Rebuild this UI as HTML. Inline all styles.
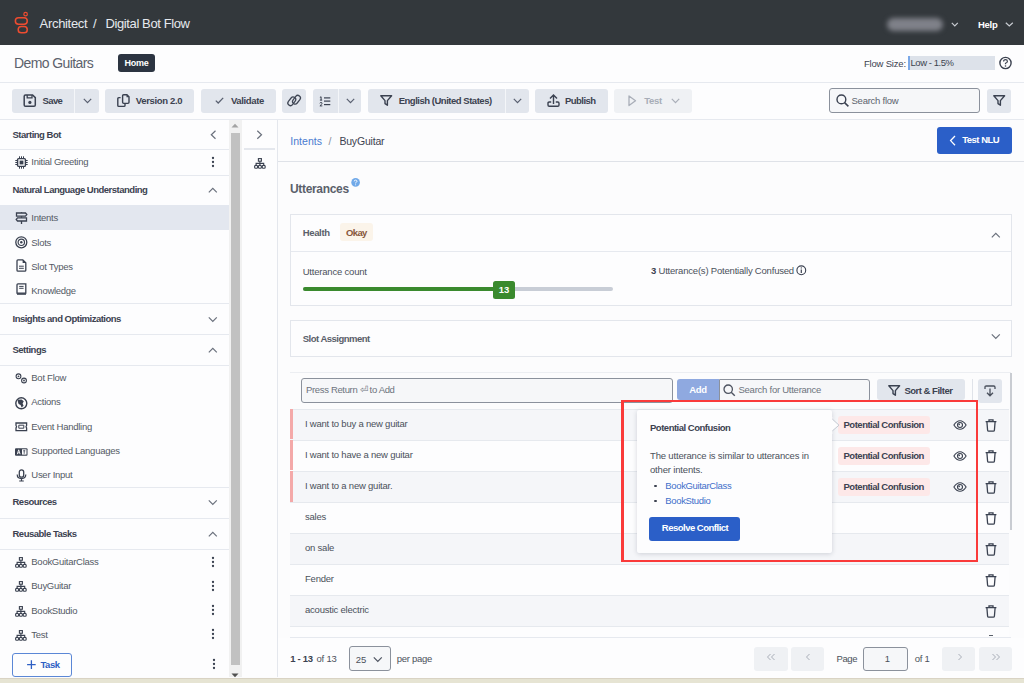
<!DOCTYPE html>
<html><head><meta charset="utf-8">
<style>
*{box-sizing:border-box;margin:0;padding:0}
html,body{width:1024px;height:683px;overflow:hidden}
body{position:relative;background:#fcfcfd;font-family:"Liberation Sans",sans-serif;color:#3c4250}
.a{position:absolute}
.t{position:absolute;white-space:nowrap;line-height:1}
.b{font-weight:bold}
.btn{position:absolute;background:#e2e6ed;border-radius:3px}
.ln{position:absolute;background:#e6e9ef}
svg{position:absolute;overflow:visible}
</style></head><body>

<!-- ===== HEADER ===== -->
<div class="a" style="left:0;top:0;width:1024px;height:45px;background:#33383c"></div>
<svg style="left:0;top:0" width="40" height="45">
  <circle cx="25.6" cy="14.2" r="1.75" fill="none" stroke="#ee4c30" stroke-width="1.2"/>
  <rect x="15.35" y="17.75" width="11.9" height="6.4" rx="3.2" fill="none" stroke="#ee4c30" stroke-width="1.5"/>
  <rect x="18.2" y="26.55" width="9.05" height="6.2" rx="3.1" fill="none" stroke="#ee4c30" stroke-width="1.5"/>
</svg>
<div class="t" style="left:39.6px;top:17px;font-size:13px;color:#e6e9ee;letter-spacing:-0.32px">Architect</div>
<div class="t" style="left:93px;top:17px;font-size:13px;color:#e6e9ee">/</div>
<div class="t" style="left:105.5px;top:17px;font-size:13px;color:#e6e9ee;letter-spacing:-0.39px">Digital Bot Flow</div>
<div class="a" style="left:887px;top:18px;width:56px;height:13px;border-radius:7px;background:#7f8189;filter:blur(2.5px)"></div>
<svg style="left:951px;top:21.5px" width="8" height="5"><path d="M0.8 0.8 L3.8 3.8 L6.8 0.8" fill="none" stroke="#c9ccd2" stroke-width="1.2"/></svg>
<div class="t b" style="left:978px;top:20px;font-size:9.5px;color:#fff;letter-spacing:-0.3px">Help</div>
<svg style="left:1005px;top:21.5px" width="9" height="5"><path d="M0.8 0.8 L4.3 4 L7.8 0.8" fill="none" stroke="#c9ccd2" stroke-width="1.2"/></svg>

<!-- ===== SUBHEADER ===== -->
<div class="a" style="left:0;top:45px;width:1024px;height:37px;background:#fdfdfe"></div>
<div class="t" style="left:14px;top:56px;font-size:14px;color:#5c626c;letter-spacing:-0.6px">Demo Guitars</div>
<div class="a" style="left:118px;top:54px;width:37px;height:18px;border-radius:3px;background:#2c3441"></div>
<div class="t b" style="left:118px;top:59px;width:37px;text-align:center;font-size:9px;color:#fff;letter-spacing:-0.2px">Home</div>
<div class="t" style="left:864px;top:59px;font-size:9.5px;color:#3c4250;letter-spacing:-0.2px">Flow Size:</div>
<div class="a" style="left:907.5px;top:56px;width:87.5px;height:14px;background:#dde2ea;border-left:2px solid #7aa8e8"></div>
<div class="t" style="left:910.5px;top:57.5px;font-size:9.5px;color:#3c4250;letter-spacing:-0.45px">Low - 1.5%</div>
<svg style="left:998px;top:56px" width="15" height="15"><circle cx="7.5" cy="7" r="5.6" fill="none" stroke="#3c4250" stroke-width="1.4"/><path d="M5.6 5.6 Q5.6 3.6 7.5 3.6 Q9.4 3.6 9.4 5.4 Q9.4 6.5 7.5 7.3 L7.5 8.3" fill="none" stroke="#3c4250" stroke-width="1.2"/><circle cx="7.5" cy="10" r="0.8" fill="#3c4250"/></svg>
<div class="ln" style="left:0;top:82px;width:1024px;height:1px"></div>

<!-- ===== TOOLBAR ===== -->
<div class="a" style="left:0;top:83px;width:1024px;height:36px;background:#fdfdfe"></div>
<!-- save -->
<div class="btn" style="left:12px;top:89px;width:86.7px;height:24px"></div>
<div class="a" style="left:74px;top:89px;width:1px;height:24px;background:#f4f6f9"></div>
<svg style="left:23.2px;top:93.8px" width="14" height="14"><path d="M1.2 2.2 Q1.2 0.9 2.5 0.9 L9.6 0.9 L12.3 3.6 L12.3 10.9 Q12.3 12.2 11 12.2 L2.5 12.2 Q1.2 12.2 1.2 10.9 Z" fill="none" stroke="#3a4150" stroke-width="1.5"/><path d="M4.2 1 L4.2 3.9 L9 3.9 L9 1" fill="none" stroke="#3a4150" stroke-width="1.3"/><circle cx="6.9" cy="8.4" r="1.6" fill="#3a4150"/></svg>
<div class="t b" style="left:42.5px;top:96px;font-size:9.5px;letter-spacing:-0.6px">Save</div>
<svg style="left:82.5px;top:97.5px" width="10" height="6"><path d="M0.8 0.8 L4.5 4.6 L8.2 0.8" fill="none" stroke="#596070" stroke-width="1.2"/></svg>
<!-- version -->
<div class="btn" style="left:105.2px;top:89px;width:88.8px;height:24px"></div>
<svg style="left:117px;top:94.3px" width="14" height="14"><path d="M5.6 1.8 Q5.6 0.7 6.7 0.7 H9.9 L12 2.8 V8.3 Q12 9.4 10.9 9.4 H6.7 Q5.6 9.4 5.6 8.3 Z" fill="none" stroke="#3a4150" stroke-width="1.4"/><path d="M9.5 0.7 L12 3.2 H9.5 Z" fill="#3a4150"/><path d="M3.6 3.6 H1.8 Q0.8 3.6 0.8 4.7 V11.4 Q0.8 12.4 1.8 12.4 H6.9 Q8 12.4 8 11.4 V10" fill="none" stroke="#3a4150" stroke-width="1.4"/></svg>
<div class="t b" style="left:135.8px;top:96px;font-size:9.5px;letter-spacing:-0.34px">Version 2.0</div>
<!-- validate -->
<div class="btn" style="left:200.6px;top:89px;width:75.4px;height:24px"></div>
<svg style="left:214.5px;top:97px" width="10" height="8"><path d="M0.8 3.6 L3.2 6 L8.2 0.9" fill="none" stroke="#596070" stroke-width="1.3"/></svg>
<div class="t b" style="left:230.9px;top:96px;font-size:9.5px;letter-spacing:-0.36px">Validate</div>
<!-- link -->
<div class="btn" style="left:282px;top:89px;width:24px;height:24px"></div>
<svg style="left:287px;top:94px" width="15" height="13"><g fill="none" stroke="#3f4654" stroke-width="1.25"><rect x="0.05" y="4.7" width="9.5" height="5.2" rx="2.6" transform="rotate(-52 4.8 7.3)"/><rect x="4.75" y="3.1" width="9.5" height="5.2" rx="2.6" transform="rotate(-52 9.5 5.7)"/></g></svg>
<!-- list -->
<div class="btn" style="left:312.6px;top:89px;width:48.9px;height:24px"></div>
<div class="a" style="left:338px;top:89px;width:1px;height:24px;background:#f4f6f9"></div>
<svg style="left:318.5px;top:95.5px" width="13" height="11"><g fill="none" stroke="#3a4150" stroke-width="1"><path d="M0.9 1.4 L2.1 0.8 V4.2 M0.9 4.1 H3.2"/><path d="M0.8 7.3 Q1.2 6.4 2.1 6.4 Q3.1 6.5 3 7.4 Q2.9 8.2 0.9 9.9 H3.3"/></g><g stroke="#3a4150" stroke-width="1.2"><path d="M5 1.9 H11.3"/><path d="M5 5.1 H11.3"/><path d="M5 8.6 H11.3"/></g></svg>
<svg style="left:345.5px;top:97.5px" width="10" height="6"><path d="M0.8 0.8 L4.5 4.6 L8.2 0.8" fill="none" stroke="#596070" stroke-width="1.2"/></svg>
<!-- english -->
<div class="btn" style="left:368px;top:89px;width:161px;height:24px"></div>
<div class="a" style="left:504.5px;top:89px;width:1px;height:24px;background:#f4f6f9"></div>
<svg style="left:379.5px;top:95px" width="13" height="11"><path d="M0.8 0.8 L11.6 0.8 L7.4 5.6 L7.4 10.2 L5 8.6 L5 5.6 Z" fill="none" stroke="#3a4150" stroke-width="1.4" stroke-linejoin="round"/></svg>
<div class="t b" style="left:398.7px;top:96px;font-size:9.5px;letter-spacing:-0.48px">English (United States)</div>
<svg style="left:512.5px;top:97.5px" width="10" height="6"><path d="M0.8 0.8 L4.5 4.6 L8.2 0.8" fill="none" stroke="#596070" stroke-width="1.2"/></svg>
<!-- publish -->
<div class="btn" style="left:535.3px;top:89px;width:72.3px;height:24px"></div>
<svg style="left:546.5px;top:94px" width="14" height="14"><path d="M4.2 8 H2.2 Q1 8 1 9.2 V11 Q1 12.3 2.2 12.3 H10.8 Q12 12.3 12 11 V9.2 Q12 8 10.8 8 H8.8" fill="none" stroke="#3a4150" stroke-width="1.4"/><path d="M6.5 10 V1.3 M3 4.6 L6.5 1.1 L10 4.6" fill="none" stroke="#3a4150" stroke-width="1.4"/></svg>
<div class="t b" style="left:564.9px;top:96px;font-size:9.5px;letter-spacing:-0.52px">Publish</div>
<!-- test -->
<div class="btn" style="left:613.9px;top:89px;width:78.4px;height:24px;background:#eff1f4"></div>
<svg style="left:627.5px;top:95px" width="9" height="12"><path d="M1 1 L7.5 5.8 L1 10.6 Z" fill="none" stroke="#a9aeb8" stroke-width="1.3" stroke-linejoin="round"/></svg>
<div class="t b" style="left:644.3px;top:96px;font-size:9.5px;letter-spacing:-0.36px;color:#a7adb7">Test</div>
<svg style="left:670.5px;top:97.5px" width="10" height="6"><path d="M0.8 0.8 L4.5 4.6 L8.2 0.8" fill="none" stroke="#a9aeb8" stroke-width="1.2"/></svg>
<!-- search flow -->
<div class="a" style="left:829.4px;top:88.4px;width:151px;height:24.3px;border:1px solid #8b919c;border-radius:3px;background:#f6f7f9"></div>
<svg style="left:835.5px;top:94px" width="14" height="14"><circle cx="5.4" cy="5.4" r="4.4" fill="none" stroke="#3a4150" stroke-width="1.4"/><path d="M8.6 8.6 L12.4 12.4" stroke="#3a4150" stroke-width="1.5"/></svg>
<div class="t" style="left:851.5px;top:96px;font-size:9.5px;letter-spacing:-0.24px;color:#5d636e">Search flow</div>
<div class="btn" style="left:987px;top:88.5px;width:24px;height:24.2px"></div>
<svg style="left:992.5px;top:95px" width="13" height="11"><path d="M0.8 0.8 L11.6 0.8 L7.4 5.6 L7.4 10.2 L5 8.6 L5 5.6 Z" fill="none" stroke="#3a4150" stroke-width="1.4" stroke-linejoin="round"/></svg>
<div class="ln" style="left:0;top:119px;width:1024px;height:1px"></div>

<!-- ===== SIDEBAR ===== -->
<div class="a" style="left:0;top:120px;width:229px;height:557px;background:#fdfdfe"></div>
<div class="t b" style="left:12.5px;top:129.8px;font-size:9.5px;letter-spacing:-0.5px;color:#3c4250">Starting Bot</div><svg style="left:210.4px;top:130px" width="7" height="10"><path d="M5.5 0.8 L1.3 4.8 L5.5 8.8" fill="none" stroke="#6a707c" stroke-width="1.2"/></svg>
<div class="ln" style="left:0px;top:149px;width:229px;height:1px"></div>
<div class="t" style="left:31.3px;top:157.4px;font-size:9.5px;letter-spacing:-0.27px;color:#545a65">Initial Greeting</div><svg style="left:15px;top:155.5px" width="13" height="13"><rect x="2.6" y="2.6" width="7.8" height="7.8" rx="1" fill="none" stroke="#3a4150" stroke-width="1.4"/><rect x="4.6" y="4.6" width="3.8" height="3.8" fill="#3a4150"/><g stroke="#3a4150" stroke-width="1"><path d="M4.5 0.3V2.4M6.5 0.3V2.4M8.5 0.3V2.4M4.5 10.6V12.7M6.5 10.6V12.7M8.5 10.6V12.7M0.3 4.5H2.4M0.3 6.5H2.4M0.3 8.5H2.4M10.6 4.5H12.7M10.6 6.5H12.7M10.6 8.5H12.7"/></g></svg><svg style="left:211px;top:155.6px" width="4" height="12"><g fill="#3a4150"><circle cx="2" cy="2" r="1.15"/><circle cx="2" cy="6" r="1.15"/><circle cx="2" cy="10" r="1.15"/></g></svg>
<div class="ln" style="left:0px;top:174.5px;width:229px;height:1px"></div>
<div class="t b" style="left:12.5px;top:185px;font-size:9.5px;letter-spacing:-0.5px;color:#3c4250">Natural Language Understanding</div><svg style="left:208px;top:187px" width="10" height="7"><path d="M0.8 5.3 L4.8 1.3 L8.8 5.3" fill="none" stroke="#6a707c" stroke-width="1.2"/></svg>
<div class="a" style="left:0;top:205px;width:229px;height:25px;background:#e3e7ef"></div>
<div class="t" style="left:31.3px;top:213px;font-size:9.5px;letter-spacing:-0.27px;color:#545a65">Intents</div><svg style="left:15px;top:212px" width="13" height="13"><g fill="none" stroke="#3a4150" stroke-width="1.3"><path d="M1.5 1 H10.5 L11.8 2.6 L10.5 4.2 H1.5 Z"/><path d="M11.5 5.8 H2.5 L1.2 7.4 L2.5 9 H11.5 Z"/><path d="M6.5 0.2 V1 M6.5 4.2 V5.8 M6.5 9 V12"/></g></svg>
<div class="t" style="left:31.3px;top:237.6px;font-size:9.5px;letter-spacing:-0.27px;color:#545a65">Slots</div><svg style="left:15px;top:235.5px" width="13" height="13"><g fill="none" stroke="#3a4150"><circle cx="6.3" cy="6.3" r="5.5" stroke-width="1.3"/><circle cx="6.3" cy="6.3" r="3.2" stroke-width="1.2"/></g><circle cx="6.3" cy="6.3" r="1.2" fill="#3a4150"/></svg>
<div class="t" style="left:31.3px;top:261.8px;font-size:9.5px;letter-spacing:-0.27px;color:#545a65">Slot Types</div><svg style="left:16px;top:258.5px" width="11" height="14"><path d="M1 1.8 Q1 0.8 2 0.8 L6.8 0.8 L9.8 3.8 L9.8 11.2 Q9.8 12.2 8.8 12.2 L2 12.2 Q1 12.2 1 11.2 Z" fill="none" stroke="#3a4150" stroke-width="1.3"/><path d="M6.6 0.8 V4 H9.8 Z" fill="#3a4150"/><path d="M3 7.2 H7.8 M3 9.3 H7.8" stroke="#3a4150" stroke-width="1"/></svg>
<div class="t" style="left:31.3px;top:285.5px;font-size:9.5px;letter-spacing:-0.27px;color:#545a65">Knowledge</div><svg style="left:16px;top:282.5px" width="11" height="13"><path d="M1 10.2 V1.8 Q1 0.8 2 0.8 L9.8 0.8 L9.8 10.2 Z" fill="none" stroke="#3a4150" stroke-width="1.3"/><rect x="1" y="10" width="9" height="2" fill="#3a4150" opacity="0.8"/><path d="M3.2 3.4 H7.6 M3.2 5.3 H7.6" stroke="#3a4150" stroke-width="1"/></svg>
<div class="ln" style="left:0px;top:303px;width:229px;height:1px"></div>
<div class="t b" style="left:12.5px;top:313.7px;font-size:9.5px;letter-spacing:-0.5px;color:#3c4250">Insights and Optimizations</div><svg style="left:208px;top:315.5px" width="10" height="7"><path d="M0.8 1.3 L4.8 5.3 L8.8 1.3" fill="none" stroke="#6a707c" stroke-width="1.2"/></svg>
<div class="ln" style="left:0px;top:334px;width:229px;height:1px"></div>
<div class="t b" style="left:12.5px;top:344.8px;font-size:9.5px;letter-spacing:-0.5px;color:#3c4250">Settings</div><svg style="left:208px;top:346.5px" width="10" height="7"><path d="M0.8 5.3 L4.8 1.3 L8.8 5.3" fill="none" stroke="#6a707c" stroke-width="1.2"/></svg>
<div class="ln" style="left:0px;top:365px;width:229px;height:1px"></div>
<div class="t" style="left:31.3px;top:373px;font-size:9.5px;letter-spacing:-0.27px;color:#545a65">Bot Flow</div><svg style="left:15px;top:373px" width="13" height="11"><g fill="none" stroke="#3a4150" stroke-width="1.1"><circle cx="3.5" cy="3.3" r="2.4"/><circle cx="9" cy="7.5" r="2.4"/></g><circle cx="3.5" cy="3.3" r="0.9" fill="#3a4150"/><circle cx="9" cy="7.5" r="0.9" fill="#3a4150"/></svg>
<div class="t" style="left:31.3px;top:397px;font-size:9.5px;letter-spacing:-0.27px;color:#545a65">Actions</div><svg style="left:15px;top:396.5px" width="13" height="13"><circle cx="6.3" cy="6.3" r="5.5" fill="none" stroke="#3a4150" stroke-width="1.4"/><path d="M3 2.8 L6.5 2.4 L8.8 4.2 L7.6 6.6 L8.6 8.8 L6.6 10.6 L5.6 8 L3.6 7 L2.8 4.6 Z" fill="#3a4150"/></svg>
<div class="t" style="left:31.3px;top:421.6px;font-size:9.5px;letter-spacing:-0.27px;color:#545a65">Event Handling</div><svg style="left:15px;top:422px" width="13" height="10"><g fill="none" stroke="#3a4150" stroke-width="1.3"><path d="M1 1 H11.6 V3.4 Q10.4 4.7 11.6 6 V8.6 H1 V6 Q2.2 4.7 1 3.4 Z"/><path d="M3.8 3.2 H8.8 V6.2 H3.8 Z" stroke-width="1"/></g></svg>
<div class="t" style="left:31.3px;top:445.5px;font-size:9.5px;letter-spacing:-0.27px;color:#545a65">Supported Languages</div><svg style="left:15px;top:447.5px" width="13" height="8"><rect x="0" y="0.2" width="12.5" height="7.5" rx="1" fill="#3a4150"/><rect x="7" y="1.3" width="4.5" height="5.3" fill="#fdfdfe"/><path d="M2.3 6.2 L3.7 1.8 L5.1 6.2 M2.8 4.8 H4.6" fill="none" stroke="#fdfdfe" stroke-width="0.9"/><path d="M8.2 2.8 H10.3 M9.2 2.3 V5.8" stroke="#3a4150" stroke-width="0.8"/></svg>
<div class="t" style="left:31.3px;top:469.8px;font-size:9.5px;letter-spacing:-0.27px;color:#545a65">User Input</div><svg style="left:16px;top:468.5px" width="11" height="13"><rect x="3.3" y="0.8" width="4.4" height="7.4" rx="2.2" fill="none" stroke="#3a4150" stroke-width="1.3"/><path d="M1.2 5.6 Q1.2 9.6 5.5 9.6 Q9.8 9.6 9.8 5.6 M5.5 9.6 V12 M3.2 12 H7.8" fill="none" stroke="#3a4150" stroke-width="1.2"/></svg>
<div class="ln" style="left:0px;top:487px;width:229px;height:1px"></div>
<div class="t b" style="left:12.5px;top:497.4px;font-size:9.5px;letter-spacing:-0.5px;color:#3c4250">Resources</div><svg style="left:208px;top:499px" width="10" height="7"><path d="M0.8 1.3 L4.8 5.3 L8.8 1.3" fill="none" stroke="#6a707c" stroke-width="1.2"/></svg>
<div class="ln" style="left:0px;top:518px;width:229px;height:1px"></div>
<div class="t b" style="left:12.5px;top:528.7px;font-size:9.5px;letter-spacing:-0.5px;color:#3c4250">Reusable Tasks</div><svg style="left:208px;top:530.5px" width="10" height="7"><path d="M0.8 5.3 L4.8 1.3 L8.8 5.3" fill="none" stroke="#6a707c" stroke-width="1.2"/></svg>
<div class="ln" style="left:0px;top:549px;width:229px;height:1px"></div>
<div class="t" style="left:31.3px;top:557.2px;font-size:9.5px;letter-spacing:-0.27px;color:#545a65">BookGuitarClass</div><svg style="left:15px;top:557.2px" width="12" height="11"><g fill="none" stroke="#3a4150" stroke-width="1.1"><rect x="4.4" y="0.6" width="3" height="2.6"/><rect x="0.6" y="7.4" width="3" height="2.8" rx="1"/><rect x="4.4" y="7.4" width="3" height="2.8" rx="1"/><rect x="8.2" y="7.4" width="3" height="2.8" rx="1"/><path d="M5.9 3.2 V7.4 M2.1 7.4 V5.4 H9.7 V7.4"/></g></svg><svg style="left:211px;top:555.7px" width="4" height="12"><g fill="#3a4150"><circle cx="2" cy="2" r="1.15"/><circle cx="2" cy="6" r="1.15"/><circle cx="2" cy="10" r="1.15"/></g></svg>
<div class="t" style="left:31.3px;top:581.4px;font-size:9.5px;letter-spacing:-0.27px;color:#545a65">BuyGuitar</div><svg style="left:15px;top:581.4px" width="12" height="11"><g fill="none" stroke="#3a4150" stroke-width="1.1"><rect x="4.4" y="0.6" width="3" height="2.6"/><rect x="0.6" y="7.4" width="3" height="2.8" rx="1"/><rect x="4.4" y="7.4" width="3" height="2.8" rx="1"/><rect x="8.2" y="7.4" width="3" height="2.8" rx="1"/><path d="M5.9 3.2 V7.4 M2.1 7.4 V5.4 H9.7 V7.4"/></g></svg><svg style="left:211px;top:579.9px" width="4" height="12"><g fill="#3a4150"><circle cx="2" cy="2" r="1.15"/><circle cx="2" cy="6" r="1.15"/><circle cx="2" cy="10" r="1.15"/></g></svg>
<div class="t" style="left:31.3px;top:605.6px;font-size:9.5px;letter-spacing:-0.27px;color:#545a65">BookStudio</div><svg style="left:15px;top:605.6px" width="12" height="11"><g fill="none" stroke="#3a4150" stroke-width="1.1"><rect x="4.4" y="0.6" width="3" height="2.6"/><rect x="0.6" y="7.4" width="3" height="2.8" rx="1"/><rect x="4.4" y="7.4" width="3" height="2.8" rx="1"/><rect x="8.2" y="7.4" width="3" height="2.8" rx="1"/><path d="M5.9 3.2 V7.4 M2.1 7.4 V5.4 H9.7 V7.4"/></g></svg><svg style="left:211px;top:604.1px" width="4" height="12"><g fill="#3a4150"><circle cx="2" cy="2" r="1.15"/><circle cx="2" cy="6" r="1.15"/><circle cx="2" cy="10" r="1.15"/></g></svg>
<div class="t" style="left:31.3px;top:629.8px;font-size:9.5px;letter-spacing:-0.27px;color:#545a65">Test</div><svg style="left:15px;top:629.8px" width="12" height="11"><g fill="none" stroke="#3a4150" stroke-width="1.1"><rect x="4.4" y="0.6" width="3" height="2.6"/><rect x="0.6" y="7.4" width="3" height="2.8" rx="1"/><rect x="4.4" y="7.4" width="3" height="2.8" rx="1"/><rect x="8.2" y="7.4" width="3" height="2.8" rx="1"/><path d="M5.9 3.2 V7.4 M2.1 7.4 V5.4 H9.7 V7.4"/></g></svg><svg style="left:211px;top:628.3px" width="4" height="12"><g fill="#3a4150"><circle cx="2" cy="2" r="1.15"/><circle cx="2" cy="6" r="1.15"/><circle cx="2" cy="10" r="1.15"/></g></svg>
<div class="a" style="left:12.3px;top:652.6px;width:59.5px;height:24px;border:1px solid #5b87d6;border-radius:3px;background:#fdfdfe"></div>
<svg style="left:26.5px;top:660px" width="10" height="10"><path d="M4.4 0.3 V8.9 M0.1 4.6 H8.7" stroke="#2e5fc4" stroke-width="1.3"/></svg>
<div class="t b" style="left:40.4px;top:659.5px;font-size:9.5px;letter-spacing:-0.4px;color:#2e5fc4">Task</div>
<svg style="left:212px;top:658px" width="4" height="12"><g fill="#3a4150"><circle cx="2" cy="2" r="1.15"/><circle cx="2" cy="6" r="1.15"/><circle cx="2" cy="10" r="1.15"/></g></svg>
<div class="a" style="left:229px;top:120px;width:12.5px;height:557px;background:#f1f1f1"></div>
<div class="a" style="left:230.5px;top:132.6px;width:9.5px;height:532.7px;background:#c1c1c1"></div>
<svg style="left:231px;top:123px" width="8" height="5"><path d="M0.5 4.5 L4 0.8 L7.5 4.5 Z" fill="#a3a3a3"/></svg>
<svg style="left:231px;top:673px" width="8" height="5"><path d="M0.5 0.5 L4 4.2 L7.5 0.5 Z" fill="#505050"/></svg>
<div class="a" style="left:241.5px;top:120px;width:36px;height:557px;background:#fdfdfe"></div>
<div class="a" style="left:277px;top:120px;width:1px;height:557px;background:#e4e7ed"></div>
<svg style="left:256.4px;top:130px" width="7" height="10"><path d="M1.3 0.8 L5.5 4.8 L1.3 8.8" fill="none" stroke="#6a707c" stroke-width="1.2"/></svg>
<div class="a" style="left:244px;top:148px;width:31px;height:2px;background:#e4e7ed"></div>
<svg style="left:253.8px;top:158px" width="12" height="11"><g fill="none" stroke="#3a4150" stroke-width="1.1"><rect x="4.4" y="0.6" width="3" height="2.6"/><rect x="0.6" y="7.4" width="3" height="2.8" rx="1"/><rect x="4.4" y="7.4" width="3" height="2.8" rx="1"/><rect x="8.2" y="7.4" width="3" height="2.8" rx="1"/><path d="M5.9 3.2 V7.4 M2.1 7.4 V5.4 H9.7 V7.4"/></g></svg>
<!-- ===== MAIN ===== -->
<div class="a" style="left:278px;top:120px;width:746px;height:557px;background:#fcfcfd"></div>
<div class="t" style="left:290.2px;top:135.8px;font-size:10.5px;letter-spacing:0.05px;color:#4a7bd0;">Intents</div>
<div class="t" style="left:328.5px;top:135.8px;font-size:10.5px;letter-spacing:0px;color:#8a909a;">/</div>
<div class="t" style="left:339.4px;top:135.8px;font-size:10.5px;letter-spacing:-0.19px;color:#3c4250;">BuyGuitar</div>
<div class="ln" style="left:278px;top:161px;width:746px;height:1px;background:#dfe2e8"></div>
<div class="a" style="left:937px;top:127px;width:75px;height:26.6px;background:#2b5fc8;border-radius:3px"></div>
<svg style="left:948.5px;top:134.5px" width="8" height="12"><path d="M6 1 L1.6 5.6 L6 10.2" fill="none" stroke="#fff" stroke-width="1.3"/></svg>
<div class="t b" style="left:962.2px;top:135.2px;font-size:9.5px;letter-spacing:-0.5px;color:#fff;">Test NLU</div>
<div class="t b" style="left:290px;top:182.7px;font-size:12px;letter-spacing:-0.33px;color:#5a606b;">Utterances</div>
<svg style="left:351.2px;top:177.8px" width="10" height="10"><circle cx="4.6" cy="4.4" r="4.3" fill="#70a9e9"/><path d="M3.2 3.4 Q3.2 2.1 4.6 2.1 Q6 2.1 6 3.3 Q6 4.1 4.6 4.7 L4.6 5.4" fill="none" stroke="#fff" stroke-width="0.9"/><circle cx="4.6" cy="6.8" r="0.55" fill="#fff"/></svg>
<div class="a" style="left:290px;top:213.5px;width:722px;height:92px;border:1px solid #e3e6ec;background:#fdfdfe"></div>
<div class="ln" style="left:291px;top:250.5px;width:720px;height:1px"></div>
<div class="t b" style="left:302.7px;top:228px;font-size:9.5px;letter-spacing:-0.34px;color:#5a606a;">Health</div>
<div class="a" style="left:339.8px;top:223px;width:33px;height:18.4px;background:#fbf4ea;border-radius:3px"></div>
<div class="t b" style="left:346px;top:228px;font-size:9.5px;letter-spacing:-0.62px;color:#87573b;">Okay</div>
<svg style="left:990.5px;top:232px" width="10" height="7"><path d="M0.8 5.3 L4.8 1.3 L8.8 5.3" fill="none" stroke="#6a707c" stroke-width="1.2"/></svg>
<div class="t" style="left:302.7px;top:266.6px;font-size:9.5px;letter-spacing:-0.2px;color:#4b515b;">Utterance count</div>
<div class="a" style="left:302.7px;top:287.3px;width:310px;height:4.2px;background:#c8cdd6;border-radius:2px"></div>
<div class="a" style="left:302.7px;top:287.3px;width:195px;height:4.2px;background:#3a8a2e;border-radius:2px"></div>
<div class="a" style="left:492.8px;top:281.2px;width:22.2px;height:17.5px;background:#3a8a2e;border-radius:2.5px"></div>
<div class="t b" style="left:492.8px;top:285px;font-size:9.5px;letter-spacing:0px;color:#fff;width:22.6px;text-align:center">13</div>
<div class="t b" style="left:651px;top:266px;font-size:9.5px;letter-spacing:0px;color:#3c4250;">3</div>
<div class="t" style="left:658.5px;top:266px;font-size:9.5px;letter-spacing:-0.2px;color:#4b515b;">Utterance(s) Potentially Confused</div>
<svg style="left:795.5px;top:264.5px" width="11" height="11"><circle cx="5.3" cy="5.3" r="4.4" fill="none" stroke="#3a4150" stroke-width="1.1"/><path d="M5.3 4.4 V8" stroke="#3a4150" stroke-width="1.2"/><circle cx="5.3" cy="2.9" r="0.65" fill="#3a4150"/></svg>
<div class="a" style="left:290px;top:320.3px;width:722px;height:36.5px;border:1px solid #e3e6ec;background:#fdfdfe"></div>
<div class="t b" style="left:302.7px;top:333.6px;font-size:9.5px;letter-spacing:-0.5px;color:#5a606a;">Slot Assignment</div>
<svg style="left:990.5px;top:333px" width="10" height="7"><path d="M0.8 1.3 L4.8 5.3 L8.8 1.3" fill="none" stroke="#6a707c" stroke-width="1.2"/></svg>
<div class="ln" style="left:290px;top:372px;width:721px;height:1px;background:#eceef2"></div>
<div class="a" style="left:300.5px;top:378.4px;width:372px;height:24.6px;border:1px solid #8b919c;border-radius:3px;background:#f6f7f9"></div>
<div class="t" style="left:306px;top:384.7px;font-size:9.5px;letter-spacing:-0.34px;color:#6d737d;">Press Return &#x23CE; to Add</div>
<div class="a" style="left:677px;top:378.6px;width:42.4px;height:21.6px;background:#8fa9e0;border-radius:3px 0 0 3px"></div>
<div class="t b" style="left:677px;top:385px;font-size:9.5px;letter-spacing:-0.3px;color:#fff;width:42px;text-align:center">Add</div>
<div class="a" style="left:719.4px;top:378.6px;width:151px;height:23.4px;border:1px solid #8b919c;border-radius:0 3px 3px 0;background:#f6f7f9"></div>
<svg style="left:722.5px;top:384px" width="13" height="13"><circle cx="5.2" cy="5.2" r="4.2" fill="none" stroke="#4d5360" stroke-width="1.3"/><path d="M8.2 8.2 L11.8 11.8" stroke="#4d5360" stroke-width="1.4"/></svg>
<div class="t" style="left:738.5px;top:385px;font-size:9.5px;letter-spacing:-0.25px;color:#6d737d;">Search for Utterance</div>
<div class="btn" style="left:876.5px;top:378.8px;width:88.5px;height:21.6px"></div>
<svg style="left:888px;top:384.5px" width="13" height="11"><path d="M0.8 0.8 L11.6 0.8 L7.4 5.6 L7.4 10.2 L5 8.6 L5 5.6 Z" fill="none" stroke="#3a4150" stroke-width="1.4" stroke-linejoin="round"/></svg>
<div class="t b" style="left:904.4px;top:385.5px;font-size:9.5px;letter-spacing:-0.49px;color:#3c4250;">Sort &amp; Filter</div>
<div class="a" style="left:971.5px;top:378.5px;width:1px;height:22px;background:#e0e3e9"></div>
<div class="btn" style="left:978.3px;top:378.8px;width:23.5px;height:24.4px"></div>
<svg style="left:984px;top:385px" width="13" height="12"><path d="M1 4 V2.2 Q1 1 2.2 1 H9.8 Q11 1 11 2.2 V4" fill="none" stroke="#4a505c" stroke-width="1.3"/><path d="M6 3.6 V10.8 M3 7.8 L6 10.8 L9 7.8" fill="none" stroke="#4a505c" stroke-width="1.3"/></svg>
<div class="a" style="left:1009.5px;top:372.5px;width:2.2px;height:157px;background:#c9ccd2"></div>
<div class="a" style="left:290px;top:409.00px;width:719px;height:31.05px;background:#f5f6f9;border-top:1px solid #e6e9ee"></div>
<div class="t" style="left:305px;top:418.90px;font-size:9.5px;letter-spacing:-0.22px;color:#4b515b;">I want to buy a new guitar</div>
<svg style="left:984.80px;top:418.70px" width="12" height="13"><path d="M0.6 2.6 H11.4 M4 2.4 V0.8 H8 V2.4" fill="none" stroke="#3a4150" stroke-width="1.3"/><path d="M1.9 2.8 L2.6 11.2 Q2.7 12.2 3.7 12.2 H8.3 Q9.3 12.2 9.4 11.2 L10.1 2.8" fill="none" stroke="#3a4150" stroke-width="1.3"/></svg>
<div class="a" style="left:290px;top:409.00px;width:3px;height:30.45px;background:#f4a9a9"></div>
<div class="a" style="left:837.5px;top:416.00px;width:92.5px;height:17.7px;background:#fde8e8;border-radius:3px"></div>
<div class="t b" style="left:843.5px;top:419.90px;font-size:9.5px;letter-spacing:-0.49px;color:#3c4250;">Potential Confusion</div>
<svg style="left:953.20px;top:419.90px" width="14" height="10"><path d="M0.9 5 Q3.6 0.7 7 0.7 Q10.4 0.7 13.1 5 Q10.4 9.3 7 9.3 Q3.6 9.3 0.9 5 Z" fill="none" stroke="#3a4150" stroke-width="1.1"/><circle cx="7" cy="5" r="2.5" fill="none" stroke="#3a4150" stroke-width="1.1"/><circle cx="6.2" cy="4.4" r="0.8" fill="#3a4150"/></svg>
<div class="a" style="left:290px;top:440.05px;width:719px;height:31.05px;background:#fdfdfe;border-top:1px solid #e6e9ee"></div>
<div class="t" style="left:305px;top:449.95px;font-size:9.5px;letter-spacing:-0.22px;color:#4b515b;">I want to have a new guitar</div>
<svg style="left:984.80px;top:449.75px" width="12" height="13"><path d="M0.6 2.6 H11.4 M4 2.4 V0.8 H8 V2.4" fill="none" stroke="#3a4150" stroke-width="1.3"/><path d="M1.9 2.8 L2.6 11.2 Q2.7 12.2 3.7 12.2 H8.3 Q9.3 12.2 9.4 11.2 L10.1 2.8" fill="none" stroke="#3a4150" stroke-width="1.3"/></svg>
<div class="a" style="left:290px;top:440.05px;width:3px;height:30.45px;background:#f4a9a9"></div>
<div class="a" style="left:837.5px;top:447.05px;width:92.5px;height:17.7px;background:#fde8e8;border-radius:3px"></div>
<div class="t b" style="left:843.5px;top:450.95px;font-size:9.5px;letter-spacing:-0.49px;color:#3c4250;">Potential Confusion</div>
<svg style="left:953.20px;top:450.95px" width="14" height="10"><path d="M0.9 5 Q3.6 0.7 7 0.7 Q10.4 0.7 13.1 5 Q10.4 9.3 7 9.3 Q3.6 9.3 0.9 5 Z" fill="none" stroke="#3a4150" stroke-width="1.1"/><circle cx="7" cy="5" r="2.5" fill="none" stroke="#3a4150" stroke-width="1.1"/><circle cx="6.2" cy="4.4" r="0.8" fill="#3a4150"/></svg>
<div class="a" style="left:290px;top:471.10px;width:719px;height:31.05px;background:#f5f6f9;border-top:1px solid #e6e9ee"></div>
<div class="t" style="left:305px;top:481.00px;font-size:9.5px;letter-spacing:-0.22px;color:#4b515b;">I want to a new guitar.</div>
<svg style="left:984.80px;top:480.80px" width="12" height="13"><path d="M0.6 2.6 H11.4 M4 2.4 V0.8 H8 V2.4" fill="none" stroke="#3a4150" stroke-width="1.3"/><path d="M1.9 2.8 L2.6 11.2 Q2.7 12.2 3.7 12.2 H8.3 Q9.3 12.2 9.4 11.2 L10.1 2.8" fill="none" stroke="#3a4150" stroke-width="1.3"/></svg>
<div class="a" style="left:290px;top:471.10px;width:3px;height:30.45px;background:#f4a9a9"></div>
<div class="a" style="left:837.5px;top:478.10px;width:92.5px;height:17.7px;background:#fde8e8;border-radius:3px"></div>
<div class="t b" style="left:843.5px;top:482.00px;font-size:9.5px;letter-spacing:-0.49px;color:#3c4250;">Potential Confusion</div>
<svg style="left:953.20px;top:482.00px" width="14" height="10"><path d="M0.9 5 Q3.6 0.7 7 0.7 Q10.4 0.7 13.1 5 Q10.4 9.3 7 9.3 Q3.6 9.3 0.9 5 Z" fill="none" stroke="#3a4150" stroke-width="1.1"/><circle cx="7" cy="5" r="2.5" fill="none" stroke="#3a4150" stroke-width="1.1"/><circle cx="6.2" cy="4.4" r="0.8" fill="#3a4150"/></svg>
<div class="a" style="left:290px;top:502.15px;width:719px;height:31.05px;background:#fdfdfe;border-top:1px solid #e6e9ee"></div>
<div class="t" style="left:305px;top:512.05px;font-size:9.5px;letter-spacing:-0.22px;color:#4b515b;">sales</div>
<svg style="left:984.80px;top:511.85px" width="12" height="13"><path d="M0.6 2.6 H11.4 M4 2.4 V0.8 H8 V2.4" fill="none" stroke="#3a4150" stroke-width="1.3"/><path d="M1.9 2.8 L2.6 11.2 Q2.7 12.2 3.7 12.2 H8.3 Q9.3 12.2 9.4 11.2 L10.1 2.8" fill="none" stroke="#3a4150" stroke-width="1.3"/></svg>
<div class="a" style="left:290px;top:533.20px;width:719px;height:31.05px;background:#f5f6f9;border-top:1px solid #e6e9ee"></div>
<div class="t" style="left:305px;top:543.10px;font-size:9.5px;letter-spacing:-0.22px;color:#4b515b;">on sale</div>
<svg style="left:984.80px;top:542.90px" width="12" height="13"><path d="M0.6 2.6 H11.4 M4 2.4 V0.8 H8 V2.4" fill="none" stroke="#3a4150" stroke-width="1.3"/><path d="M1.9 2.8 L2.6 11.2 Q2.7 12.2 3.7 12.2 H8.3 Q9.3 12.2 9.4 11.2 L10.1 2.8" fill="none" stroke="#3a4150" stroke-width="1.3"/></svg>
<div class="a" style="left:290px;top:564.25px;width:719px;height:31.05px;background:#fdfdfe;border-top:1px solid #e6e9ee"></div>
<div class="t" style="left:305px;top:574.15px;font-size:9.5px;letter-spacing:-0.22px;color:#4b515b;">Fender</div>
<svg style="left:984.80px;top:573.95px" width="12" height="13"><path d="M0.6 2.6 H11.4 M4 2.4 V0.8 H8 V2.4" fill="none" stroke="#3a4150" stroke-width="1.3"/><path d="M1.9 2.8 L2.6 11.2 Q2.7 12.2 3.7 12.2 H8.3 Q9.3 12.2 9.4 11.2 L10.1 2.8" fill="none" stroke="#3a4150" stroke-width="1.3"/></svg>
<div class="a" style="left:290px;top:595.30px;width:719px;height:31.05px;background:#f5f6f9;border-top:1px solid #e6e9ee"></div>
<div class="t" style="left:305px;top:605.20px;font-size:9.5px;letter-spacing:-0.22px;color:#4b515b;">acoustic electric</div>
<svg style="left:984.80px;top:605.00px" width="12" height="13"><path d="M0.6 2.6 H11.4 M4 2.4 V0.8 H8 V2.4" fill="none" stroke="#3a4150" stroke-width="1.3"/><path d="M1.9 2.8 L2.6 11.2 Q2.7 12.2 3.7 12.2 H8.3 Q9.3 12.2 9.4 11.2 L10.1 2.8" fill="none" stroke="#3a4150" stroke-width="1.3"/></svg>
<div class="a" style="left:290px;top:626.35px;width:719px;height:10.35px;background:#fdfdfe;border-top:1px solid #e6e9ee"></div>
<div class="a" style="left:989px;top:634.9px;width:4px;height:1.3px;background:#5a606a"></div>
<div class="ln" style="left:290px;top:636.7px;width:721px;height:1px"></div>
<div class="a" style="left:278px;top:637.7px;width:746px;height:40px;background:#fdfdfe"></div>
<div class="t b" style="left:290.2px;top:654px;font-size:9.5px;letter-spacing:-0.3px;color:#3c4250;">1 - 13</div>
<div class="t" style="left:316.5px;top:654px;font-size:9.5px;letter-spacing:-0.2px;color:#4b515b;">of 13</div>
<div class="a" style="left:349px;top:646.4px;width:41.5px;height:24.4px;border:1px solid #8b919c;border-radius:3px;background:#f6f7f9"></div>
<div class="t" style="left:355.8px;top:655px;font-size:9.5px;letter-spacing:0px;color:#4b515b;">25</div>
<svg style="left:372.7px;top:656px" width="10" height="7"><path d="M0.8 1.3 L4.8 5.3 L8.8 1.3" fill="none" stroke="#4d5360" stroke-width="1.2"/></svg>
<div class="t" style="left:396.8px;top:654px;font-size:9.5px;letter-spacing:-0.29px;color:#4b515b;">per page</div>
<div class="a" style="left:754.4px;top:646.6px;width:33.3px;height:24.2px;background:#eff1f4;border-radius:3px"></div>
<div class="a" style="left:791px;top:646.6px;width:33px;height:24.2px;background:#eff1f4;border-radius:3px"></div>
<div class="a" style="left:942.4px;top:646.6px;width:32.8px;height:24.2px;background:#eff1f4;border-radius:3px"></div>
<div class="a" style="left:979px;top:646.6px;width:32.8px;height:24.2px;background:#eff1f4;border-radius:3px"></div>
<svg style="left:766px;top:653px" width="10" height="8"><path d="M4.5 1 L1.5 4 L4.5 7 M8.5 1 L5.5 4 L8.5 7" fill="none" stroke="#a9aeb8" stroke-width="1"/></svg>
<svg style="left:805px;top:653px" width="6" height="8"><path d="M4.5 1 L1.5 4 L4.5 7" fill="none" stroke="#a9aeb8" stroke-width="1"/></svg>
<svg style="left:956.5px;top:653px" width="6" height="8"><path d="M1.5 1 L4.5 4 L1.5 7" fill="none" stroke="#a9aeb8" stroke-width="1"/></svg>
<svg style="left:991px;top:653px" width="10" height="8"><path d="M1.5 1 L4.5 4 L1.5 7 M5.5 1 L8.5 4 L5.5 7" fill="none" stroke="#a9aeb8" stroke-width="1"/></svg>
<div class="t" style="left:836.5px;top:654px;font-size:9.5px;letter-spacing:-0.42px;color:#4b515b;">Page</div>
<div class="a" style="left:863px;top:646.6px;width:44.8px;height:24.2px;border:1px solid #8b919c;border-radius:3px;background:#f6f7f9"></div>
<div class="t" style="left:865px;top:654px;font-size:9.5px;letter-spacing:0px;color:#4b515b;width:44.8px;text-align:center">1</div>
<div class="t" style="left:914.7px;top:654px;font-size:9.5px;letter-spacing:-0.29px;color:#4b515b;">of 1</div>
<div class="a" style="left:621px;top:400px;width:357px;height:162px;border:2px solid #fa3a3a;border-left-width:3px"></div>
<div class="a" style="left:637.4px;top:410px;width:194.2px;height:142.6px;background:#fdfdfe;border-radius:2px;box-shadow:0 1px 5px rgba(30,40,60,0.18)"></div>
<svg style="left:826px;top:417px" width="16" height="17"><path d="M6 1.8 L13 8.2 L6 14.2 Z" fill="#fdfdfe"/><path d="M6 1.8 L13 8.2 L6 14.2" fill="none" stroke="#c3c8d1" stroke-width="1"/><rect x="0" y="0" width="6.3" height="17" fill="#fdfdfe"/></svg>
<div class="t b" style="left:650px;top:423.1px;font-size:9.5px;letter-spacing:-0.49px;color:#3c4250;">Potential Confusion</div>
<div class="t" style="left:650px;top:450.5px;font-size:9.5px;letter-spacing:-0.17px;color:#4b515b;">The utterance is similar to utterances in</div>
<div class="t" style="left:650px;top:465.4px;font-size:9.5px;letter-spacing:-0.17px;color:#4b515b;">other intents.</div>
<div class="a" style="left:654.2px;top:484.8px;width:2.6px;height:2.6px;border-radius:50%;background:#3c4250"></div>
<div class="a" style="left:654.2px;top:499.8px;width:2.6px;height:2.6px;border-radius:50%;background:#3c4250"></div>
<div class="t" style="left:665.3px;top:480.8px;font-size:9.5px;letter-spacing:-0.35px;color:#3f6fca;">BookGuitarClass</div>
<div class="t" style="left:665.3px;top:495.8px;font-size:9.5px;letter-spacing:-0.35px;color:#3f6fca;">BookStudio</div>
<div class="a" style="left:649.4px;top:516.5px;width:90.6px;height:24.1px;background:#2b5fc8;border-radius:3px"></div>
<div class="t b" style="left:661.8px;top:523.4px;font-size:9.5px;letter-spacing:-0.5px;color:#fff;">Resolve Conflict</div>
<div class="a" style="left:0;top:677.5px;width:1024px;height:6px;background:#e6e4d3;border-top:1.5px solid #d9d3c4"></div>
</body></html>
